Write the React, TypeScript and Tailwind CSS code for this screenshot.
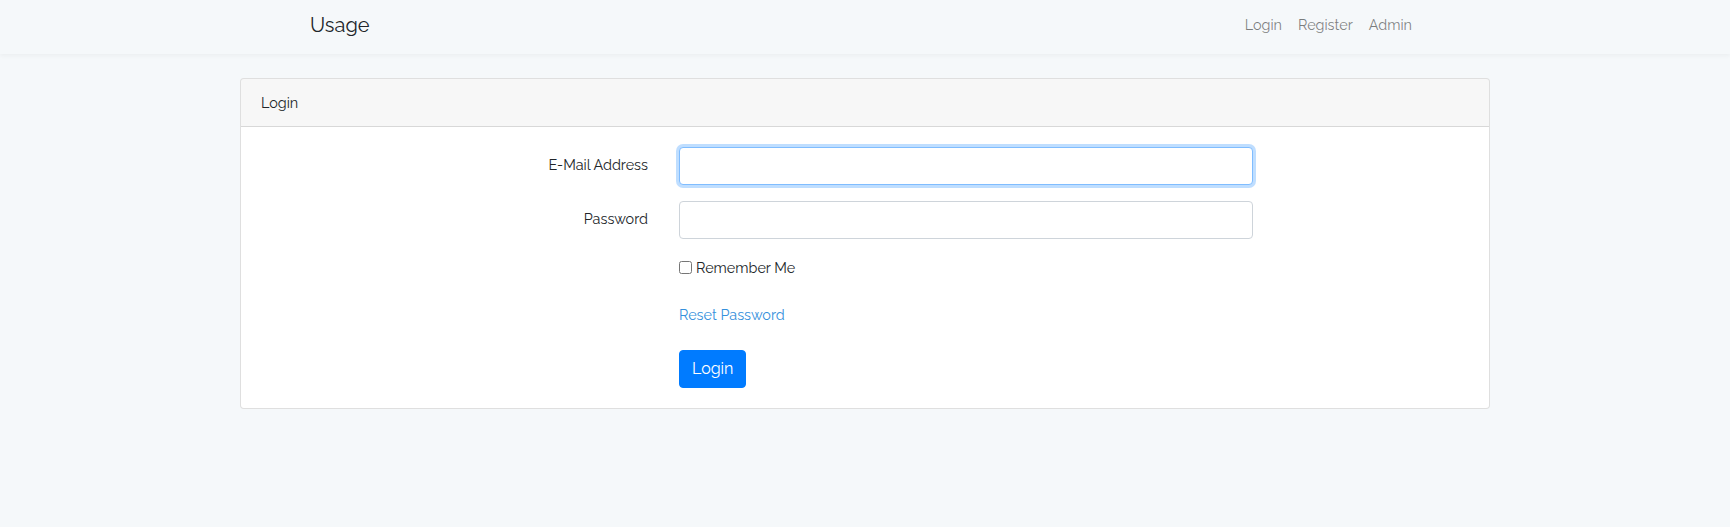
import React from "react";

export default function App() {
  return (
    <div
      className="min-h-[527px] w-full bg-[#f5f8fa] text-[#212529] text-[14.4px] leading-[1.6]"
      style={{ fontFamily: "Raleway, Lato, 'Open Sans', sans-serif" }}
    >
      <nav className="h-[54px] bg-[#f5f8fa] shadow-[0_2px_4px_rgba(0,0,0,0.04)] relative">
        <div className="mx-auto flex h-[50px] w-[1140px] items-center justify-between px-[15px]">
          <a className="text-[20px] leading-[1.5] text-[#212529]">Usage</a>
          <div className="flex items-center">
            <a className="px-[8px] text-[rgba(0,0,0,0.5)]">Login</a>
            <a className="px-[8px] text-[rgba(0,0,0,0.5)]">Register</a>
            <a className="px-[8px] text-[rgba(0,0,0,0.5)]">Admin</a>
          </div>
        </div>
      </nav>
      <main className="pt-[24px]">
        <div className="mx-auto w-[1250px] rounded-[4px] border border-[rgba(0,0,0,0.125)] bg-white">
          <div className="rounded-t-[3px] border-b border-[rgba(0,0,0,0.125)] bg-[rgba(0,0,0,0.03)] px-[20px] py-[12px]">
            Login
          </div>
          <div className="px-[20px] pt-[20px] pb-[20px]">
            <div className="mb-[16px] flex items-start">
              <label className="w-[418px] pr-[31px] pt-[6px] text-right">E-Mail Address</label>
              <input
                type="email"
                className="h-[38px] w-[574px] rounded-[4px] border border-[#80bdff] bg-white px-[12px] shadow-[0_0_0_3px_rgba(0,123,255,0.25)] outline-none"
              />
            </div>
            <div className="mb-[14px] flex items-start">
              <label className="w-[418px] pr-[31px] pt-[6px] text-right">Password</label>
              <input
                type="password"
                className="h-[38px] w-[574px] rounded-[4px] border border-[#ced4da] bg-white px-[12px] outline-none"
              />
            </div>
            <div className="mb-[17px] flex h-[28px] items-center pl-[418px]">
              <input type="checkbox" className="m-0 mr-[4px] h-[13px] w-[13px]" />
              <label>Remember Me</label>
            </div>
            <div className="mb-[20px] flex h-[32px] items-center pl-[418px]">
              <a className="text-[#3490dc]">Reset Password</a>
            </div>
            <div className="flex pl-[418px]">
              <button className="h-[38px] rounded-[4px] border border-[#007bff] bg-[#007bff] px-[12px] text-[16px] leading-[1.5] text-white">
                Login
              </button>
            </div>
          </div>
        </div>
      </main>
    </div>
  );
}
